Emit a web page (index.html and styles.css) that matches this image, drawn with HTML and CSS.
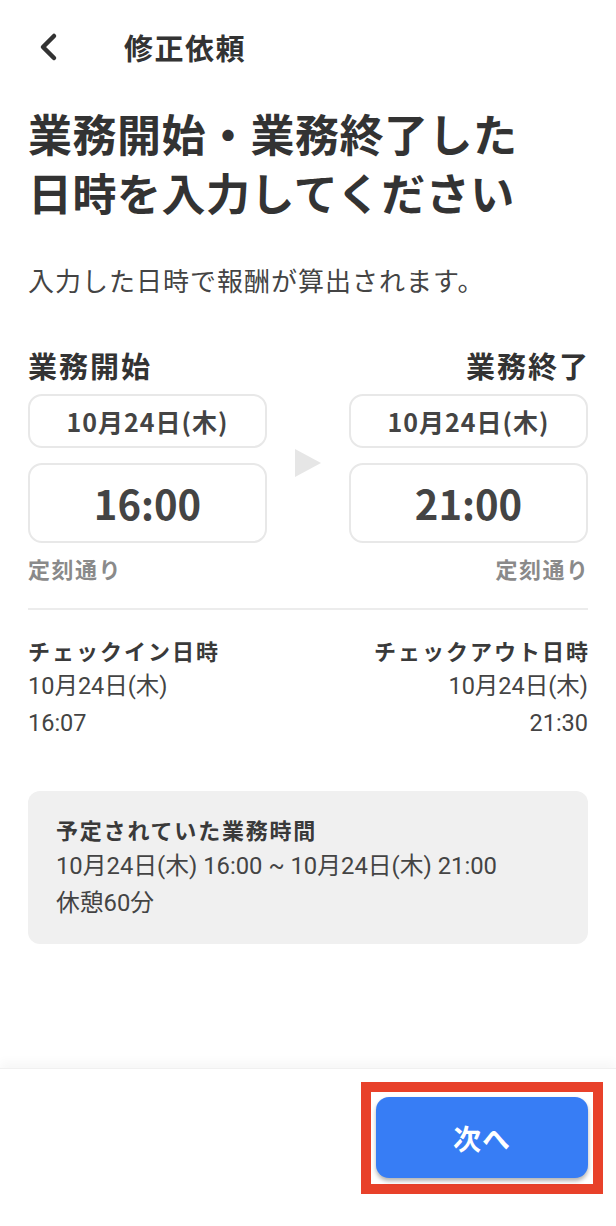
FILE: index.html
```html
<!DOCTYPE html>
<html lang="ja">
<head>
<meta charset="utf-8">
<title>修正依頼</title>
<link rel="stylesheet" href="styles.css">
</head>
<body>
<div class="app">
  <div class="content">
    <header class="topbar">
      <span class="back" aria-label="戻る">
        <svg width="24" height="30" viewBox="0 0 24 30"><polyline points="17,4 6,15 17,26" fill="none" stroke="#333" stroke-width="4.5" stroke-linecap="round" stroke-linejoin="round"/></svg>
      </span>
      <h1 class="title">修正依頼</h1>
    </header>

    <h2 class="heading">業務開始・業務終了した<br>日時を入力してください</h2>
    <p class="lead">入力した日時で報酬が算出されます。</p>

    <section class="range">
      <div class="col">
        <div class="col-label">業務開始</div>
        <div class="box date-box">10月24日(木)</div>
        <div class="box time-box">16:00</div>
        <div class="note">定刻通り</div>
      </div>
      <div class="arrow">
        <svg width="26" height="28" viewBox="0 0 26 28"><polygon points="0,0 26,14 0,28" fill="#e6e6e6"/></svg>
      </div>
      <div class="col col-right">
        <div class="col-label">業務終了</div>
        <div class="box date-box">10月24日(木)</div>
        <div class="box time-box">21:00</div>
        <div class="note">定刻通り</div>
      </div>
    </section>

    <hr class="divider">

    <section class="checks">
      <div class="check">
        <div class="check-label">チェックイン日時</div>
        <div class="check-val">10月24日(木)</div>
        <div class="check-val">16:07</div>
      </div>
      <div class="check check-right">
        <div class="check-label">チェックアウト日時</div>
        <div class="check-val">10月24日(木)</div>
        <div class="check-val">21:30</div>
      </div>
    </section>

    <section class="planned">
      <div class="planned-title">予定されていた業務時間</div>
      <div class="planned-val">10月24日(木) 16:00 ~ 10月24日(木) 21:00</div>
      <div class="planned-val">休憩60分</div>
    </section>
  </div>

  <footer class="bottombar">
    <div class="highlight">
      <button class="next">次へ</button>
    </div>
  </footer>
</div>
</body>
</html>
```

FILE: styles.css
```css
* { box-sizing: border-box; }

html, body {
  margin: 0;
  padding: 0;
  background: #ffffff;
}

body {
  font-family: "Noto Sans CJK JP", "Noto Sans", sans-serif;
  color: #333333;
}

.app {
  height: 100vh;
  display: flex;
  flex-direction: column;
}

.content {
  flex: 1;
  padding: 0 28px;
}

.topbar {
  height: 94px;
  display: flex;
  align-items: center;
}

.back {
  width: 96px;
  display: flex;
  align-items: center;
  padding-left: 9px;
}

.back svg { display: block; }

.title {
  margin: 0;
  font-size: 29px;
  font-weight: 700;
  letter-spacing: 1.5px;
  color: #333;
  line-height: 1;
}

.heading {
  margin: 10px 0 0;
  font-size: 44px;
  font-weight: 700;
  line-height: 59px;
  letter-spacing: 0.5px;
  color: #333;
}

.lead {
  margin: 40px 0 0;
  font-size: 26px;
  line-height: 36px;
  letter-spacing: 1px;
  color: #444;
}

.range {
  margin-top: 49px;
  display: flex;
  align-items: center;
  justify-content: space-between;
}

.col {
  width: 239px;
  display: flex;
  flex-direction: column;
}

.col-right { text-align: right; }

.col-label {
  font-size: 29px;
  font-weight: 700;
  line-height: 36px;
  letter-spacing: 2px;
  color: #333;
}

.col-right .col-label { margin-right: -2px; }

.box {
  border: 2px solid #e8e8e8;
  border-radius: 14px;
  display: flex;
  align-items: center;
  justify-content: center;
  font-weight: 700;
  color: #444;
}

.date-box {
  margin-top: 11px;
  height: 54px;
  font-size: 25px;
  letter-spacing: 1px;
}

.time-box {
  margin-top: 15px;
  height: 80px;
  font-size: 40px;
}

.note {
  margin-top: 10px;
  font-size: 22px;
  line-height: 30px;
  font-weight: 700;
  letter-spacing: 1.5px;
  color: #8a8a8a;
}

.col-right .note { margin-right: -1.5px; }

.arrow {
  display: flex;
  align-items: center;
  justify-content: center;
  padding-bottom: 5px;
}

.arrow svg { display: block; }

.divider {
  margin: 25px 0 0;
  border: 0;
  height: 2px;
  background: #ececec;
}

.checks {
  margin-top: 22px;
  display: flex;
  justify-content: space-between;
}

.check-right { text-align: right; }

.check-label {
  font-size: 22px;
  line-height: 36px;
  font-weight: 700;
  letter-spacing: 2px;
  color: #3a3a3a;
}

.check-right .check-label { margin-right: -2px; }

.check-val {
  font-family: Roboto, "Noto Sans CJK JP", sans-serif;
  font-size: 23.5px;
  line-height: 37px;
  color: #444;
}

.planned {
  margin-top: 49px;
  background: #f0f0f0;
  border-radius: 12px;
  padding: 20px 28px 22px;
}

.planned-title {
  font-size: 22px;
  line-height: 37px;
  font-weight: 700;
  letter-spacing: 1.8px;
  color: #3a3a3a;
}

.planned-val {
  font-family: Roboto, "Noto Sans CJK JP", sans-serif;
  font-size: 23.8px;
  line-height: 37px;
  color: #444;
}

.bottombar {
  height: 158px;
  border-top: 1px solid #f0f0f0;
  box-shadow: 0 -6px 10px rgba(0, 0, 0, 0.035);
  display: flex;
  justify-content: flex-end;
  align-items: flex-start;
  padding: 13px 13px 0 0;
}

.highlight {
  border: 10px solid #e8412a;
  padding: 5px 5px 6px;
  background: #fff;
}

.next {
  display: block;
  width: 212px;
  height: 81px;
  border: 0;
  border-radius: 13px;
  background: #377df5;
  color: #fff;
  font-family: "Noto Sans CJK JP", sans-serif;
  font-size: 28px;
  font-weight: 700;
  letter-spacing: 1px;
  box-shadow: 0 3px 4px rgba(0, 0, 0, 0.3);
}
```
